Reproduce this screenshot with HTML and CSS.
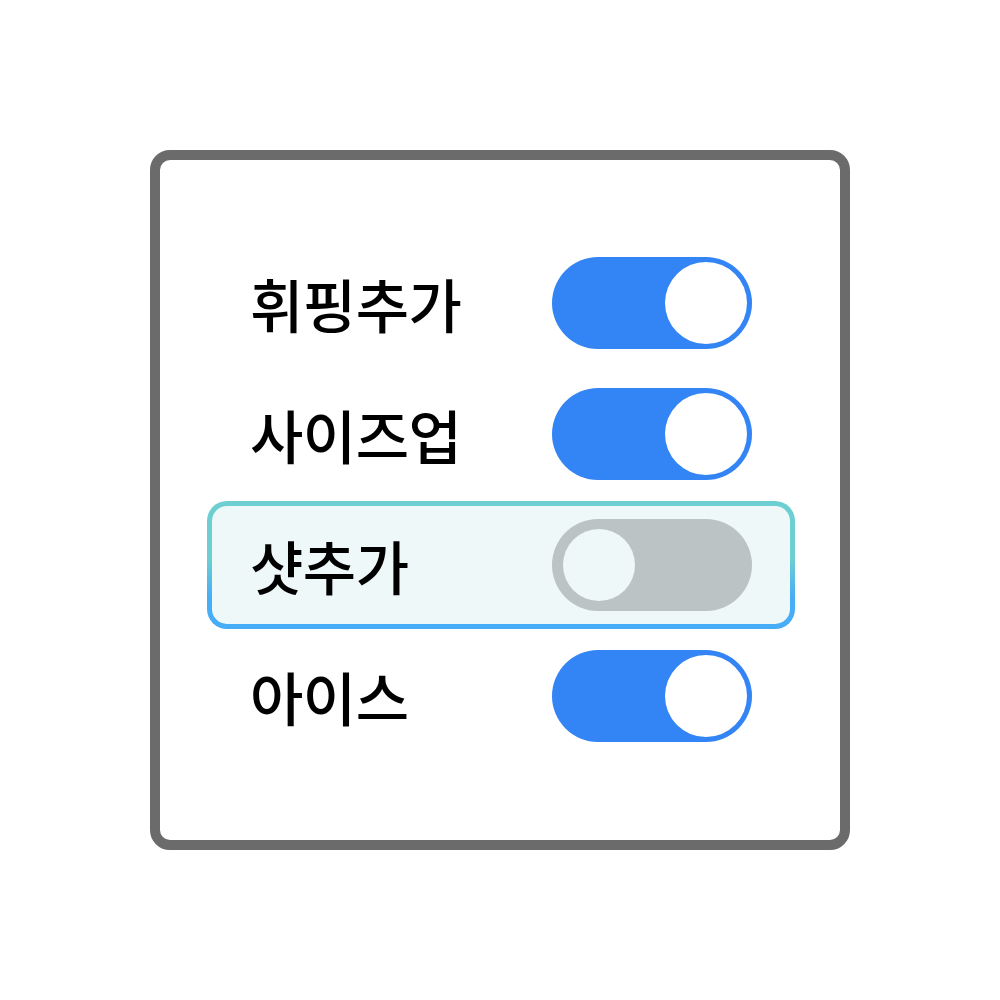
FILE: index.html
```html
<!DOCTYPE html>
<html lang="ko">
  <head>
    <meta charset="UTF-8" />
    <title>옵션</title>
    <link rel="stylesheet" href="styles.css">
  </head>
  <body>
    <div class="main">
      <div class="card">
        <div class="row">
          <span class="label">휘핑추가</span>
          <span class="toggle on"><span class="knob"></span></span>
        </div>
        <div class="row">
          <span class="label">사이즈업</span>
          <span class="toggle on"><span class="knob"></span></span>
        </div>
        <div class="row active">
          <span class="label">샷추가</span>
          <span class="toggle off"><span class="knob"></span></span>
        </div>
        <div class="row">
          <span class="label">아이스</span>
          <span class="toggle on"><span class="knob"></span></span>
        </div>
      </div>
    </div>
  </body>
</html>
```
FILE: styles.css
```css
* {
  margin: 0;
  padding: 0;
  box-sizing: border-box;
}

body {
  background-color: #ffffff;
  font-family: "Noto Sans CJK KR", "Noto Sans", sans-serif;
  color: #000000;
}

div.main {
  display: flex;
  align-items: center;
  justify-content: center;
  width: 100vw;
  height: 100vh;
}

.card {
  width: 700px;
  height: 700px;
  border: 10px solid #6b6b6b;
  border-radius: 20px;
  padding: 79px 45px 0 47px;
  display: flex;
  flex-direction: column;
  gap: 3px;
}

.row {
  height: 128px;
  width: 588px;
  border: 5px solid transparent;
  border-radius: 20px;
  padding: 0 38px;
  display: flex;
  align-items: center;
  justify-content: space-between;
}

.row.active {
  background: linear-gradient(#eff8f9, #eff8f9) padding-box,
    linear-gradient(#6dcfd1 0%, #6dcfd1 45%, #47adf6 75%, #47adf6 100%) border-box;
}

.label {
  font-size: 58px;
  font-weight: 500;
  line-height: 1;
  letter-spacing: -0.5px;
}

.toggle {
  width: 200px;
  height: 92px;
  border-radius: 46px;
  display: flex;
  align-items: center;
}

.toggle.on {
  background-color: #3384f4;
  justify-content: flex-end;
  padding: 0 5px;
}

.toggle.on .knob {
  width: 82px;
  height: 82px;
  border-radius: 50%;
  background-color: #ffffff;
}

.toggle.off {
  background-color: #bbc3c4;
  padding: 0 11px;
}

.toggle.off .knob {
  width: 72px;
  height: 72px;
  border-radius: 50%;
  background-color: #eff8f9;
}
```
